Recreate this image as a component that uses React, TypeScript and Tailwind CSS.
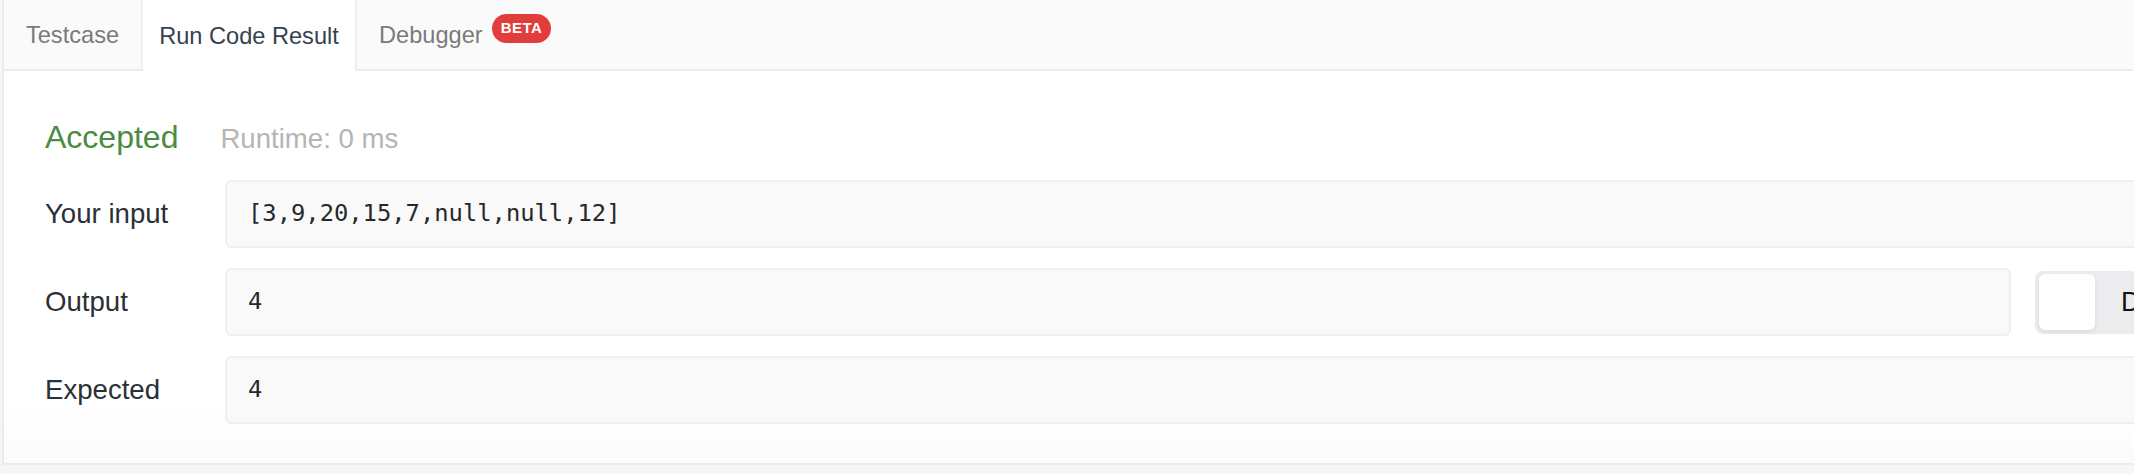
import React from "react";

const sans = { fontFamily: '"Liberation Sans", Arial, sans-serif' };

function Row({ label, value, children, boxClass }: { label: string; value: string; children?: React.ReactNode; boxClass: string }) {
  return (
    <div className="flex items-center">
      <div className="w-[180px] shrink-0 text-[27.6px] leading-none text-[#2a3036]">{label}</div>
      <div className={`h-[68px] flex items-center pl-[21px] rounded-[6px] border-2 border-[#efefef] bg-[#f9f9f9] font-['DejaVu_Sans_Mono',monospace] text-[23.8px] text-[#26292c] ${boxClass}`}>
        {value}
      </div>
      {children}
    </div>
  );
}

export default function App() {
  return (
    <div className="w-[2134px] h-[474px] overflow-hidden bg-[#f6f6f6]" style={sans}>
      <div className="ml-[2px] w-[2300px] h-[465px] border-x-2 border-b-2 border-[#ebebeb] bg-white flex flex-col">
        <div className="h-[71px] shrink-0 flex items-stretch bg-[#fafafa] border-b-2 border-[#ececec] text-[23.6px]">
          <div className="w-[139px] pt-[3px] flex items-center justify-center border-r-2 border-[#efefef] text-[#7a7a7a]">Testcase</div>
          <div className="w-[214px] pt-[3px] -mb-[2px] flex items-center justify-center border-r-2 border-[#efefef] bg-white text-[#35424f]">Run Code Result</div>
          <div className="pt-[3px] flex items-center pl-[22px] text-[#7a7a7a]">
            <span>Debugger</span>
            <span className="ml-[9px] -mt-[16px] h-[29px] px-[9px] rounded-full bg-[#e23d3d] text-white text-[15px] font-bold flex items-center tracking-[0.5px]">BETA</span>
          </div>
        </div>
        <div className="flex-1 pl-[41px] pt-[46px] pb-[39px] flex flex-col bg-gradient-to-b from-white from-[85%] to-[#fbfbfb]">
          <div className="flex items-baseline h-[40px] leading-[40px]">
            <span className="text-[32px] text-[#4b8b3f]">Accepted</span>
            <span className="ml-[42px] text-[27.6px] text-[#b5b5b5]">Runtime: 0 ms</span>
          </div>
          <div className="mt-[23px] flex flex-col gap-[20px]">
            <Row label="Your input" value="[3,9,20,15,7,null,null,12]" boxClass="w-[2020px]" />
            <Row label="Output" value="4" boxClass="w-[1786px]">
              <div className="ml-[24px] h-[63px] w-[200px] rounded-l-[8px] bg-[#ececee] flex items-center pl-[4px]">
                <div className="w-[56px] h-[56px] rounded-[6px] bg-white shadow-[0_2px_5px_rgba(0,0,0,0.08)]" />
                <span className="ml-[26px] text-[27px] text-[#111]">Diff</span>
              </div>
            </Row>
            <Row label="Expected" value="4" boxClass="w-[2020px]" />
          </div>
        </div>
      </div>
    </div>
  );
}
